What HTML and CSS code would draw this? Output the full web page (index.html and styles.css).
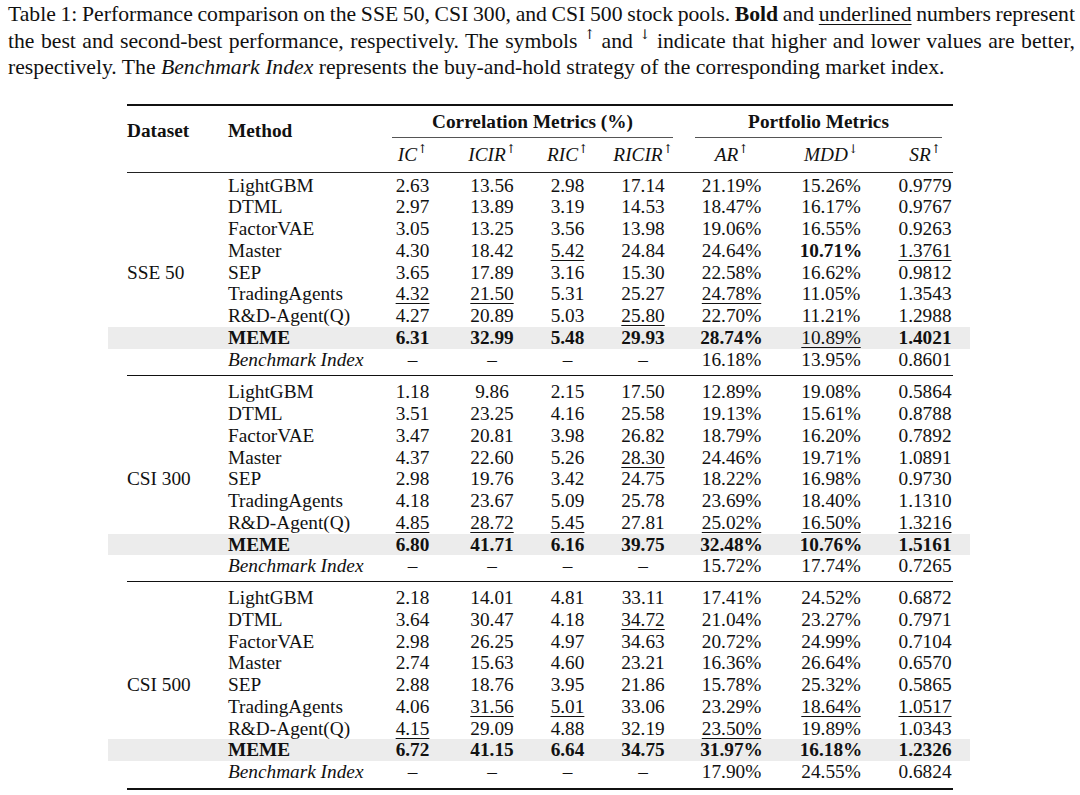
FILE: index.html
```html
<!DOCTYPE html>
<html>
<head>
<meta charset="utf-8">
<link rel="stylesheet" href="styles.css">
</head>
<body>
<div class="caption">
  <span class="line just tight">Table 1: Performance comparison on the SSE 50, CSI 300, and CSI 500 stock pools. <b>Bold</b> and <u>underlined</u> numbers represent</span>
  <span class="line just">the best and second-best performance, respectively. The symbols <sup>↑</sup> and <sup>↓</sup> indicate that higher and lower values are better,</span>
  <span class="line">respectively. The <i>Benchmark Index</i> represents the buy-and-hold strategy of the corresponding market index.</span>
</div>
<table class="results">
  <colgroup>
    <col class="c-ds"><col class="c-m"><col class="c-ic"><col class="c-icir"><col class="c-ric"><col class="c-ricir"><col class="c-ar"><col class="c-mdd"><col class="c-sr">
  </colgroup>
  <thead>
    <tr class="h1">
      <th rowspan="2" class="lab ds">Dataset</th>
      <th rowspan="2" class="lab meth">Method</th>
      <th colspan="4" class="grp"><div class="grp-corr">Correlation Metrics (%)</div></th>
      <th colspan="3" class="grp"><div class="grp-port">Portfolio Metrics</div></th>
    </tr>
    <tr class="h2">
      <th>IC<sup>↑</sup></th>
      <th>ICIR<sup>↑</sup></th>
      <th>RIC<sup>↑</sup></th>
      <th>RICIR<sup>↑</sup></th>
      <th>AR<sup>↑</sup></th>
      <th class="mdd">MDD<sup>↓</sup></th>
      <th>SR<sup>↑</sup></th>
    </tr>
  </thead>
  <tbody class="first">
    <tr><td></td><td class="m">LightGBM</td><td>2.63</td><td>13.56</td><td>2.98</td><td>17.14</td><td>21.19%</td><td class="mdd">15.26%</td><td>0.9779</td></tr>
    <tr><td></td><td class="m">DTML</td><td>2.97</td><td>13.89</td><td>3.19</td><td>14.53</td><td>18.47%</td><td class="mdd">16.17%</td><td>0.9767</td></tr>
    <tr><td></td><td class="m">FactorVAE</td><td>3.05</td><td>13.25</td><td>3.56</td><td>13.98</td><td>19.06%</td><td class="mdd">16.55%</td><td>0.9263</td></tr>
    <tr><td></td><td class="m">Master</td><td>4.30</td><td>18.42</td><td><u>5.42</u></td><td>24.84</td><td>24.64%</td><td class="mdd"><b>10.71%</b></td><td><u>1.3761</u></td></tr>
    <tr><td class="ds">SSE 50</td><td class="m">SEP</td><td>3.65</td><td>17.89</td><td>3.16</td><td>15.30</td><td>22.58%</td><td class="mdd">16.62%</td><td>0.9812</td></tr>
    <tr><td></td><td class="m">TradingAgents</td><td><u>4.32</u></td><td><u>21.50</u></td><td>5.31</td><td>25.27</td><td><u>24.78%</u></td><td class="mdd">11.05%</td><td>1.3543</td></tr>
    <tr><td></td><td class="m">R&amp;D-Agent(Q)</td><td>4.27</td><td>20.89</td><td>5.03</td><td><u>25.80</u></td><td>22.70%</td><td class="mdd">11.21%</td><td>1.2988</td></tr>
    <tr class="best"><td></td><td class="m"><b>MEME</b></td><td><b>6.31</b></td><td><b>32.99</b></td><td><b>5.48</b></td><td><b>29.93</b></td><td><b>28.74%</b></td><td class="mdd"><u>10.89%</u></td><td><b>1.4021</b></td></tr>
    <tr><td></td><td class="m"><i>Benchmark Index</i></td><td>–</td><td>–</td><td>–</td><td>–</td><td>16.18%</td><td class="mdd">13.95%</td><td>0.8601</td></tr>
  </tbody>
  <tbody class="mid">
    <tr><td></td><td class="m">LightGBM</td><td>1.18</td><td>9.86</td><td>2.15</td><td>17.50</td><td>12.89%</td><td class="mdd">19.08%</td><td>0.5864</td></tr>
    <tr><td></td><td class="m">DTML</td><td>3.51</td><td>23.25</td><td>4.16</td><td>25.58</td><td>19.13%</td><td class="mdd">15.61%</td><td>0.8788</td></tr>
    <tr><td></td><td class="m">FactorVAE</td><td>3.47</td><td>20.81</td><td>3.98</td><td>26.82</td><td>18.79%</td><td class="mdd">16.20%</td><td>0.7892</td></tr>
    <tr><td></td><td class="m">Master</td><td>4.37</td><td>22.60</td><td>5.26</td><td><u>28.30</u></td><td>24.46%</td><td class="mdd">19.71%</td><td>1.0891</td></tr>
    <tr><td class="ds">CSI 300</td><td class="m">SEP</td><td>2.98</td><td>19.76</td><td>3.42</td><td>24.75</td><td>18.22%</td><td class="mdd">16.98%</td><td>0.9730</td></tr>
    <tr><td></td><td class="m">TradingAgents</td><td>4.18</td><td>23.67</td><td>5.09</td><td>25.78</td><td>23.69%</td><td class="mdd">18.40%</td><td>1.1310</td></tr>
    <tr><td></td><td class="m">R&amp;D-Agent(Q)</td><td><u>4.85</u></td><td><u>28.72</u></td><td><u>5.45</u></td><td>27.81</td><td><u>25.02%</u></td><td class="mdd"><u>16.50%</u></td><td><u>1.3216</u></td></tr>
    <tr class="best"><td></td><td class="m"><b>MEME</b></td><td><b>6.80</b></td><td><b>41.71</b></td><td><b>6.16</b></td><td><b>39.75</b></td><td><b>32.48%</b></td><td class="mdd"><b>10.76%</b></td><td><b>1.5161</b></td></tr>
    <tr><td></td><td class="m"><i>Benchmark Index</i></td><td>–</td><td>–</td><td>–</td><td>–</td><td>15.72%</td><td class="mdd">17.74%</td><td>0.7265</td></tr>
  </tbody>
  <tbody class="last">
    <tr><td></td><td class="m">LightGBM</td><td>2.18</td><td>14.01</td><td>4.81</td><td>33.11</td><td>17.41%</td><td class="mdd">24.52%</td><td>0.6872</td></tr>
    <tr><td></td><td class="m">DTML</td><td>3.64</td><td>30.47</td><td>4.18</td><td><u>34.72</u></td><td>21.04%</td><td class="mdd">23.27%</td><td>0.7971</td></tr>
    <tr><td></td><td class="m">FactorVAE</td><td>2.98</td><td>26.25</td><td>4.97</td><td>34.63</td><td>20.72%</td><td class="mdd">24.99%</td><td>0.7104</td></tr>
    <tr><td></td><td class="m">Master</td><td>2.74</td><td>15.63</td><td>4.60</td><td>23.21</td><td>16.36%</td><td class="mdd">26.64%</td><td>0.6570</td></tr>
    <tr><td class="ds">CSI 500</td><td class="m">SEP</td><td>2.88</td><td>18.76</td><td>3.95</td><td>21.86</td><td>15.78%</td><td class="mdd">25.32%</td><td>0.5865</td></tr>
    <tr><td></td><td class="m">TradingAgents</td><td>4.06</td><td><u>31.56</u></td><td><u>5.01</u></td><td>33.06</td><td>23.29%</td><td class="mdd"><u>18.64%</u></td><td><u>1.0517</u></td></tr>
    <tr><td></td><td class="m">R&amp;D-Agent(Q)</td><td><u>4.15</u></td><td>29.09</td><td>4.88</td><td>32.19</td><td><u>23.50%</u></td><td class="mdd">19.89%</td><td>1.0343</td></tr>
    <tr class="best"><td></td><td class="m"><b>MEME</b></td><td><b>6.72</b></td><td><b>41.15</b></td><td><b>6.64</b></td><td><b>34.75</b></td><td><b>31.97%</b></td><td class="mdd"><b>16.18%</b></td><td><b>1.2326</b></td></tr>
    <tr><td></td><td class="m"><i>Benchmark Index</i></td><td>–</td><td>–</td><td>–</td><td>–</td><td>17.90%</td><td class="mdd">24.55%</td><td>0.6824</td></tr>
  </tbody>
</table>
</body>
</html>
```

FILE: styles.css
```css
html, body {
  background: #ffffff;
}
body {
  margin: 0;
  padding: 1px 5px 0 8px;
  color: #111111;
  font-family: "Liberation Serif", "Times New Roman", serif;
}

.caption {
  font-size: 21.7px;
  line-height: 26.5px;
}
.caption .line {
  display: block;
  text-align: left;
}
.caption .line.just {
  text-align: justify;
  text-align-last: justify;
}
.caption .line.tight {
  word-spacing: -1.5px;
}
.caption u,
.results u {
  text-decoration: underline;
  text-decoration-thickness: 1px;
  text-underline-offset: 3px;
}
.caption sup {
  font-family: "DejaVu Serif", serif;
  font-size: 0.62em;
  line-height: 0;
  vertical-align: 0.65em;
}

.results {
  margin: 23px 0 0 119px;
  width: 826px;
  table-layout: fixed;
  border-collapse: collapse;
  font-size: 19.3px;
  line-height: 21.75px;
}
.c-ds { width: 91px; }
.c-m { width: 162px; }
.c-ic { width: 65px; }
.c-icir { width: 94px; }
.c-ric { width: 57px; }
.c-ricir { width: 94px; }
.c-ar { width: 83px; }
.c-mdd { width: 124px; }
.c-sr { width: 56px; }

.results th,
.results td {
  padding: 0;
  text-align: center;
  white-space: nowrap;
}
.results .mdd {
  padding-right: 8px;
}

.results thead tr.h1 {
  border-top: 2px solid #111111;
}
.results th.lab {
  text-align: left;
  vertical-align: top;
  padding-top: 14px;
  font-weight: bold;
}
.results th.meth {
  padding-left: 10px;
}
.results th.grp {
  font-weight: bold;
}
.grp-corr,
.grp-port {
  line-height: 31px;
  border-bottom: 1px solid #555555;
}
.grp-corr {
  margin: 0 17px 0 12px;
}
.grp-port {
  margin: 0 11px 0 5px;
}
.results tr.h2 {
  border-bottom: 1px solid #222222;
}
.results tr.h2 th {
  font-weight: normal;
  font-style: italic;
  line-height: 34px;
}
.results sup {
  font-family: "DejaVu Serif", serif;
  font-style: normal;
  font-size: 0.62em;
  line-height: 0;
  vertical-align: 0.7em;
}

.results td.ds {
  text-align: left;
}
.results td.m {
  text-align: left;
  padding-left: 10px;
}
.results tbody + tbody {
  border-top: 1px solid #111111;
}
.results tbody tr:first-child td {
  padding-top: 5px;
}
.results tbody.first tr:first-child td {
  padding-top: 2px;
}
.results tbody tr:last-child td {
  padding-bottom: 5px;
}
.results tbody.mid tr:last-child td {
  padding-bottom: 4px;
}
.results tbody.last {
  border-bottom: 2px solid #111111;
}

.results tr.best td {
  background: #ececec;
}
.results tr.best td:first-child {
  box-shadow: -19px 0 0 #ececec;
}
.results tr.best td:last-child {
  box-shadow: 17px 0 0 #ececec;
}
```
